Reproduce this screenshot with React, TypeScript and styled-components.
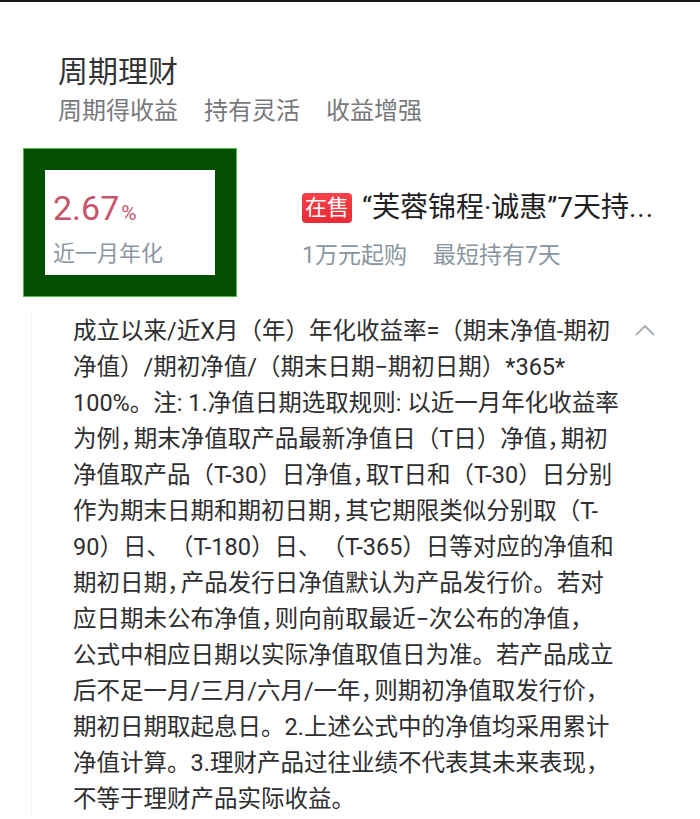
import React from "react";
import styled, { createGlobalStyle } from "styled-components";

const Global = createGlobalStyle`
  html, body { margin: 0; padding: 0; background: #ffffff; }
  body { font-family: Roboto, "Noto Sans CJK SC", sans-serif; -webkit-font-smoothing: antialiased; text-spacing-trim: space-all; }
`;

const Page = styled.div`
  width: 700px;
  min-height: 819px;
  background: #ffffff;
  box-sizing: border-box;
`;

const TopBar = styled.div`
  height: 2px;
  background: #151b1b;
`;

const Header = styled.div`
  padding: 50px 0 0 58px;
`;

const Title = styled.div`
  font-size: 30px;
  line-height: 40px;
  color: #333336;
`;

const Tags = styled.div`
  display: flex;
  gap: 26px;
  margin-top: 3px;
  font-size: 24px;
  line-height: 32px;
  color: #77787c;
`;

const ProductRow = styled.div`
  display: flex;
  align-items: flex-start;
  margin: 21px 0 0 23px;
`;

const RateBox = styled.div`
  border: 22px solid #024f02;
  outline: 1px solid #48c048;
  outline-offset: -1px;
  background: #ffffff;
  padding: 0 0 0 8px;
  box-sizing: border-box;
  width: 214px;
  height: 149px;
  display: flex;
  flex-direction: column;
`;

const Rate = styled.div`
  margin-top: 18px;
  color: #c7546d;
  font-family: Roboto, sans-serif;
  font-size: 34px;
  line-height: 40px;
  display: flex;
  align-items: baseline;
`;

const Percent = styled.span`
  font-size: 21px;
  margin-left: 2px;
`;

const RateLabel = styled.div`
  margin-top: 6px;
  font-size: 22px;
  line-height: 30px;
  color: #8b97a2;
`;

const Info = styled.div`
  margin: 44px 0 0 65px;
  display: flex;
  flex-direction: column;
  min-width: 0;
`;

const NameRow = styled.div`
  display: flex;
  align-items: center;
  gap: 10px;
  height: 31px;
`;

const Badge = styled.span`
  flex: none;
  background: linear-gradient(180deg, #f6404a 0%, #ea2b35 100%);
  color: #ffffff;
  font-size: 22px;
  line-height: 30px;
  padding: 0 3px;
  border-radius: 4px;
`;

const Name = styled.span`
  font-size: 28px;
  line-height: 34px;
  color: #222224;
  white-space: nowrap;
`;

const Dots = styled.span`
  letter-spacing: 1px;
`;

const Meta = styled.div`
  display: flex;
  gap: 26px;
  margin-top: 18px;
  font-size: 23px;
  line-height: 30px;
  color: #8995a0;
`;

const Desc = styled.div`
  display: flex;
  align-items: flex-start;
  margin: 16px 0 0 31px;
  padding-left: 41px;
  border-left: 1px solid #f1f5f8;
`;

const DescText = styled.div`
  font-size: 23.5px;
  line-height: 36px;
  color: #2e2e30;
  width: 560px;
`;

const Line = styled.span`
  display: block;
  white-space: pre;
`;

const Comma = styled.span`
  letter-spacing: -0.42em;
  margin-right: 0;
`;

const Toggle = styled.svg`
  flex: none;
  margin: 9px 0 0 0;
  width: 24px;
  height: 16px;
`;

const lines = [
  "成立以来/近X月（年）年化收益率=（期末净值-期初",
  "净值）/期初净值/（期末日期−期初日期）*365*",
  "100%。注: 1.净值日期选取规则: 以近一月年化收益率",
  "为例，期末净值取产品最新净值日（T日）净值，期初",
  "净值取产品（T-30）日净值，取T日和（T-30）日分别",
  "作为期末日期和期初日期，其它期限类似分别取（T-",
  "90）日、（T-180）日、（T-365）日等对应的净值和",
  "期初日期，产品发行日净值默认为产品发行价。若对",
  "应日期未公布净值，则向前取最近−次公布的净值，",
  "公式中相应日期以实际净值取值日为准。若产品成立",
  "后不足一月/三月/六月/一年，则期初净值取发行价，",
  "期初日期取起息日。2.上述公式中的净值均采用累计",
  "净值计算。3.理财产品过往业绩不代表其未来表现，",
  "不等于理财产品实际收益。",
];

const renderLine = (l: string) =>
  l.split("，").map((part, i, arr) => (
    <React.Fragment key={i}>
      {part}
      {i < arr.length - 1 && <Comma>，</Comma>}
    </React.Fragment>
  ));

export default function App() {
  return (
    <Page>
      <Global />
      <TopBar />
      <Header>
        <Title>周期理财</Title>
        <Tags>
          <span>周期得收益</span>
          <span>持有灵活</span>
          <span>收益增强</span>
        </Tags>
      </Header>
      <ProductRow>
        <RateBox>
          <Rate>
            2.67<Percent>%</Percent>
          </Rate>
          <RateLabel>近一月年化</RateLabel>
        </RateBox>
        <Info>
          <NameRow>
            <Badge>在售</Badge>
            <Name>
              “芙蓉锦程·诚惠”7天持<Dots>...</Dots>
            </Name>
          </NameRow>
          <Meta>
            <span>1万元起购</span>
            <span>最短持有7天</span>
          </Meta>
        </Info>
      </ProductRow>
      <Desc>
        <DescText>
          {lines.map((l, i) => (
            <Line key={i}>{renderLine(l)}</Line>
          ))}
        </DescText>
        <Toggle viewBox="0 0 24 16">
          <polyline points="3,13 12,4 21,13" fill="none" stroke="#a3adb7" strokeWidth="1.8" />
        </Toggle>
      </Desc>
    </Page>
  );
}
